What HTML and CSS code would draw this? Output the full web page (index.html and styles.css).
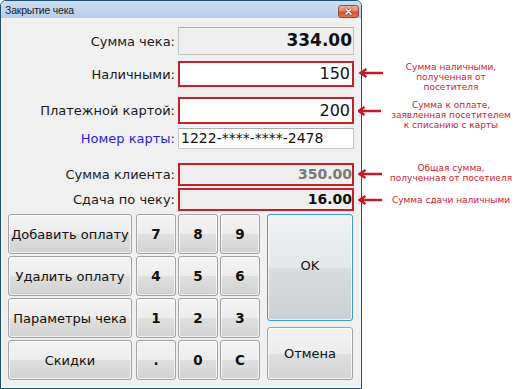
FILE: index.html
```html
<!DOCTYPE html>
<html lang="ru">
<head>
    <meta charset="UTF-8">
    <title>Закрытие чека</title>
    <link rel="stylesheet" href="styles.css">
</head>
<body>
    <div class="screen">
        <!-- Dialog window -->
        <div class="window">
            <div class="titlebar">
                <span class="title">Закрытие чека</span>
                <span class="close">
                    <svg width="19" height="11" viewBox="0 0 19 11">
                        <path d="M7 3 L12 8 M12 3 L7 8" stroke="#a33a26" stroke-width="2.8" stroke-linecap="round"/>
                        <path d="M7 3 L12 8 M12 3 L7 8" stroke="#fff" stroke-width="1.7" stroke-linecap="round"/>
                    </svg>
                </span>
            </div>

            <div class="client">
                <div class="row r1">
                    <span class="label">Сумма чека:</span>
                    <div class="field ro total">334.00</div>
                </div>
                <div class="row r2">
                    <span class="label">Наличными:</span>
                    <div class="field edit red">150</div>
                </div>
                <div class="row r3">
                    <span class="label">Платежной картой:</span>
                    <div class="field edit red">200</div>
                </div>
                <div class="row r4">
                    <span class="label blue">Номер карты:</span>
                    <div class="field card">1222-****-****-2478</div>
                </div>
                <div class="row r5">
                    <span class="label">Сумма клиента:</span>
                    <div class="field ro red sum muted">350.00</div>
                </div>
                <div class="row r6">
                    <span class="label">Сдача по чеку:</span>
                    <div class="field ro red sum">16.00</div>
                </div>

                <!-- Keypad -->
                <div class="pad">
                    <div class="actions">
                        <button class="btn">Добавить оплату</button>
                        <button class="btn">Удалить оплату</button>
                        <button class="btn">Параметры чека</button>
                        <button class="btn">Скидки</button>
                    </div>
                    <div class="digits">
                        <button class="btn num">7</button>
                        <button class="btn num">8</button>
                        <button class="btn num">9</button>
                        <button class="btn num">4</button>
                        <button class="btn num">5</button>
                        <button class="btn num">6</button>
                        <button class="btn num">1</button>
                        <button class="btn num">2</button>
                        <button class="btn num">3</button>
                        <button class="btn num">.</button>
                        <button class="btn num">0</button>
                        <button class="btn num">C</button>
                    </div>
                    <div class="confirm">
                        <button class="btn ok">OK</button>
                        <button class="btn cancel">Отмена</button>
                    </div>
                </div>
            </div>
        </div>

        <!-- Annotations -->
        <div class="notes">
            <div class="note n1">
                <svg class="arrow" width="25" height="10" viewBox="0 0 25 10"><path d="M3 5 H25 M8.5 1 L2.5 5 L8.5 9" fill="none" stroke="#c8192b" stroke-width="2.4"/></svg>
                <div class="note-text">Сумма наличными,<br>полученная от<br>посетителя</div>
            </div>
            <div class="note n2">
                <svg class="arrow" width="25" height="10" viewBox="0 0 25 10"><path d="M1 5 H23 M6.5 1 L0.5 5 L6.5 9" fill="none" stroke="#c8192b" stroke-width="2.4"/></svg>
                <div class="note-text">Сумма к оплате,<br>заявленная посетителем<br>к списанию с карты</div>
            </div>
            <div class="note n3">
                <svg class="arrow" width="25" height="10" viewBox="0 0 25 10"><path d="M2 5 H24 M7.5 1 L1.5 5 L7.5 9" fill="none" stroke="#c8192b" stroke-width="2.4"/></svg>
                <div class="note-text">Общая сумма,<br>полученная от посетиеля</div>
            </div>
            <div class="note n4 single">
                <svg class="arrow" width="25" height="10" viewBox="0 0 25 10"><path d="M2 5 H24 M7.5 1 L1.5 5 L7.5 9" fill="none" stroke="#c8192b" stroke-width="2.4"/></svg>
                <div class="note-text">Сумма сдачи наличными</div>
            </div>
        </div>
    </div>
</body>
</html>
```

FILE: styles.css
```css
/* Base */
html, body {
    margin: 0;
    padding: 0;
    background: #fff;
}
* {
    box-sizing: border-box;
}

.screen {
    display: flex;
    width: 524px;
    height: 389px;
    font-family: "DejaVu Sans", Verdana, sans-serif;
}

/* Window */
.window {
    width: 362px;
    height: 389px;
    display: flex;
    flex-direction: column;
    border: 1px solid #21506c;
    border-radius: 6px 6px 0 0;
    background: #f4f7fb;
    overflow: hidden;
    position: relative;
    z-index: 0;
}

.titlebar {
    height: 17px;
    display: flex;
    align-items: center;
    justify-content: space-between;
    padding: 0 2px 0 4px;
    background: linear-gradient(#cadef3, #b6cfea);
}

.title {
    font-family: "Liberation Sans", Arial, sans-serif;
    font-size: 10.5px;
    color: #1a1a1a;
    letter-spacing: -0.2px;
}

.close {
    display: flex;
    width: 21px;
    height: 13px;
    margin-top: 3px;
    border: 1px solid #9a4a3c;
    border-radius: 3px;
    background: linear-gradient(#f0b2a2, #e2846c 45%, #d0502f 55%, #dc7456);
}

.client {
    flex: 1;
    margin: 0 1px 1px 1px;
    padding: 9px 6px 0 6px;
    background: #f0f0f0;
}

/* Form rows */
.row {
    display: grid;
    grid-template-columns: 1fr 176px;
    column-gap: 3px;
    align-items: center;
}

.r1 { height: 28px; }
.r2 { height: 26px; margin-top: 6px; }
.r3 { height: 27px; margin-top: 10px; }
.r4 { height: 21px; margin-top: 4px; }
.r5 { height: 23px; margin-top: 14px; }
.r6 { height: 23px; margin-top: 2px; }

.label {
    text-align: right;
    font-size: 13px;
    color: #1a1a1a;
}

.label.blue {
    color: #1f1fd8;
}

.field {
    height: 100%;
    display: flex;
    align-items: center;
    justify-content: flex-end;
    padding: 0 1px 1px 0;
    color: #111;
}

.field.ro {
    background: #efefef;
    border: 1px solid #c6c6c6;
    border-top-color: #acacac;
}

.field.edit {
    background: #fff;
    font-size: 16px;
    padding-right: 2px;
}

.field.red {
    border: 2px solid #c4202c;
}

.field.total {
    font-size: 17px;
    font-weight: bold;
    padding-bottom: 3px;
}

.field.card {
    background: #fff;
    border: 1px solid #c8c8c8;
    border-top-color: #adadad;
    justify-content: flex-start;
    padding-left: 2px;
    font-size: 14px;
}

.field.sum {
    font-size: 14px;
    font-weight: bold;
    padding-right: 0;
}

.field.muted {
    color: #7a7a7a;
}

/* Keypad */
.pad {
    display: flex;
    margin-top: 3px;
    height: 166px;
}

.actions {
    width: 124px;
    display: grid;
    grid-template-rows: repeat(4, 40px);
    row-gap: 2px;
}

.digits {
    width: 124px;
    margin-left: 4px;
    display: grid;
    grid-template-columns: repeat(3, 40px);
    grid-template-rows: repeat(4, 40px);
    gap: 2px;
}

.confirm {
    width: 86px;
    margin-left: 7px;
    display: flex;
    flex-direction: column;
}

.btn {
    margin: 0;
    padding: 0;
    font-family: "DejaVu Sans", Verdana, sans-serif;
    font-size: 13px;
    color: #111;
    border: 1px solid #a2a2a2;
    border-radius: 3px;
    background: linear-gradient(#f4f4f4, #ececec 50%, #dfdfdf 51%, #d2d2d2);
    box-shadow: inset 0 0 0 1px rgba(255, 255, 255, 0.7);
}

.btn.num {
    font-size: 13.5px;
    font-weight: bold;
}

.btn.ok {
    height: 107px;
    border-color: #3c9ad6;
    padding-bottom: 4px;
    background: linear-gradient(#eef2f5, #e4e8eb 50%, #d8dcdf 51%, #cdd1d4);
}

.btn.cancel {
    height: 53px;
    margin-top: 6px;
}

/* Annotations */
.notes {
    width: 166px;
    margin-left: -4px;
    padding-top: 62px;
    position: relative;
    z-index: 1;
}

.note {
    display: flex;
    align-items: flex-start;
}

.n2 { margin-top: 8px; }
.n3 { margin-top: 33px; }
.n4 { margin-top: 12px; }

.arrow {
    flex: none;
    margin-top: 6px;
}

.note.single .arrow {
    margin-top: 0;
}

.note-text {
    width: 136px;
    text-align: center;
    font-size: 9px;
    line-height: 10px;
    color: #cf2232;
}
```
